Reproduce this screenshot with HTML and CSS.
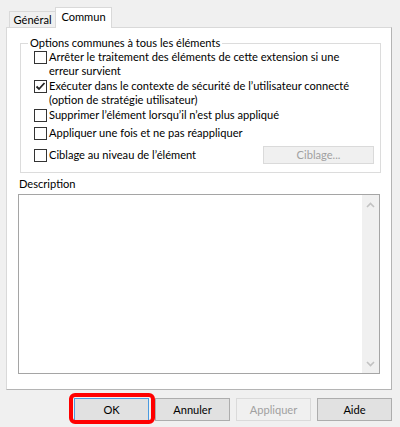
FILE: index.html
```html
<!DOCTYPE html>
<html lang="fr">
<head>
<meta charset="utf-8">
<link rel="stylesheet" href="styles.css">
</head>
<body>
<div class="dialog">
  <div class="tabs">
    <div class="tab">Général</div>
    <div class="tab active">Commun</div>
  </div>
  <div class="panel">
    <fieldset class="group">
      <legend>Options communes à tous les éléments</legend>
      <div class="rows">
        <div class="row r1">
          <span class="cb"></span>
          <span class="lbl">Arrêter le traitement des éléments de cette extension si une<br>erreur survient</span>
        </div>
        <div class="row r2">
          <span class="cb checked"><svg width="11" height="11" viewBox="0 0 11 11"><path d="M1.5 5.5 L4 8 L9.5 2" fill="none" stroke="#222" stroke-width="1.8"/></svg></span>
          <span class="lbl">Exécuter dans le contexte de sécurité de l’utilisateur connecté<br>(option de stratégie utilisateur)</span>
        </div>
        <div class="row r3">
          <span class="cb"></span>
          <span class="lbl">Supprimer l’élément lorsqu’il n’est plus appliqué</span>
        </div>
        <div class="row r4">
          <span class="cb"></span>
          <span class="lbl">Appliquer une fois et ne pas réappliquer</span>
        </div>
        <div class="row r5">
          <span class="cb"></span>
          <span class="lbl">Ciblage au niveau de l’élément</span>
          <span class="btn small disabled">Ciblage...</span>
        </div>
      </div>
    </fieldset>
    <div class="desc-label">Description</div>
    <div class="textbox">
      <div class="scrollbar">
        <svg width="17" height="10" viewBox="0 0 17 10"><path d="M5 7 L8.5 3.5 L12 7" fill="none" stroke="#c2c2c2" stroke-width="1.6"/></svg>
        <svg width="17" height="10" viewBox="0 0 17 10"><path d="M5 3 L8.5 6.5 L12 3" fill="none" stroke="#c2c2c2" stroke-width="1.6"/></svg>
      </div>
    </div>
  </div>
  <div class="buttons">
    <span class="btn default">OK<span class="highlight"></span></span>
    <span class="btn">Annuler</span>
    <span class="btn disabled">Appliquer</span>
    <span class="btn">Aide</span>
  </div>
</div>
</body>
</html>
```
FILE: styles.css
```css
* { box-sizing: border-box; }
html, body {
  margin: 0;
  padding: 0;
  background: #f0f0f0;
}
body {
  font-family: Lato, "Noto Sans", sans-serif;
  font-size: 11.1px;
  color: #000;
  width: 400px;
  height: 427px;
  overflow: hidden;
}
.dialog {
  padding-top: 7px;
}
.tabs {
  display: flex;
  align-items: flex-end;
  padding-left: 9px;
  height: 21px;
  margin-bottom: -1px;
  position: relative;
  z-index: 1;
}
.tab {
  height: 16px;
  width: 47px;
  border: 1px solid #d9d9d9;
  border-bottom: none;
  background: #f0f0f0;
  display: flex;
  align-items: center;
  justify-content: center;
  line-height: 14px;
  margin-bottom: 1px;
  white-space: nowrap;
}
.tab.active {
  height: 21px;
  width: 57px;
  background: #fff;
  border-color: #d9d9d9;
  margin-bottom: 0;
  margin-left: -1px;
  align-items: flex-start;
  padding-top: 2px;
}
.panel {
  margin-left: 6px;
  width: 386px;
  height: 363px;
  background: #fff;
  border: 1px solid #d9d9d9;
  border-right-color: #b4b4b4;
  border-bottom-color: #b4b4b4;
  display: flex;
  flex-direction: column;
}
.group {
  margin: 8px 10px 0 13px;
  padding: 0 0 8px 0;
  border: 1px solid #dcdcdc;
  min-width: 0;
}
.group legend {
  margin-left: 7px;
  padding: 0 2px;
  line-height: 14px;
}
.rows {
  padding-left: 13px;
  padding-right: 6px;
}
.row {
  display: flex;
  align-items: flex-start;
  line-height: 14px;
  white-space: nowrap;
}
.cb {
  width: 13px;
  height: 13px;
  border: 1px solid #333;
  background: #fff;
  flex: none;
  margin-top: 1px;
  margin-right: 2px;
  display: flex;
  align-items: center;
  justify-content: center;
}
.r2 { margin-top: 1px; }
.r3 { margin-top: 1px; }
.r4 { margin-top: 4px; }
.r5 {
  margin-top: 6px;
  align-items: center;
}
.r5 .cb { margin-top: 0; }
.btn {
  display: inline-flex;
  align-items: center;
  justify-content: center;
  width: 75px;
  height: 23px;
  background: #e1e1e1;
  border: 1px solid #adadad;
  position: relative;
}
.btn.small {
  margin-left: auto;
  width: 111px;
  height: 18px;
}
.btn.disabled {
  background: #f0f0f0;
  border-color: #dadada;
  color: #a0a0a0;
}
.btn.default {
  border-color: #4a9ae0;
}
.highlight {
  position: absolute;
  left: -6px;
  right: -7px;
  top: -6px;
  bottom: -4px;
  border: 4px solid #ff0000;
  border-radius: 6px;
}
.desc-label {
  margin: 4px 0 0 12px;
  line-height: 14px;
}
.textbox {
  margin: 3px 0 0 11px;
  width: 362px;
  height: 180px;
  border: 1px solid #a5a5a5;
  display: flex;
  justify-content: flex-end;
}
.scrollbar {
  width: 17px;
  background: #f0f0f0;
  display: flex;
  flex-direction: column;
  justify-content: space-between;
  padding: 5px 0 4px;
}
.scrollbar svg { display: block; }
.buttons {
  display: flex;
  justify-content: flex-end;
  gap: 6px;
  padding-right: 8px;
  margin-top: 8px;
}
```
